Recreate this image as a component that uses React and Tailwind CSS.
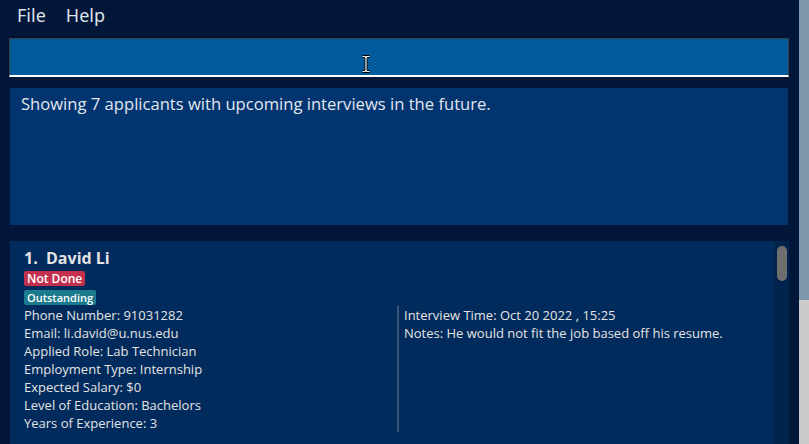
import React from 'react';

const DETAILS = [
  'Phone Number: 91031282',
  'Email: li.david@u.nus.edu',
  'Applied Role: Lab Technician',
  'Employment Type: Internship',
  'Expected Salary: $0',
  'Level of Education: Bachelors',
  'Years of Experience: 3',
];

const IBeam = () => (
  <svg width="10" height="18" viewBox="0 0 10 18" className="absolute left-[351px] top-[16px]">
    <path d="M1.5 1.5h2.5l1 1 1-1h2.5M5 2.5v13M1.5 16.5h2.5l1-1 1 1h2.5" fill="none" stroke="#000" strokeWidth="3" />
    <path d="M1.5 1.5h2.5l1 1 1-1h2.5M5 2.5v13M1.5 16.5h2.5l1-1 1 1h2.5" fill="none" stroke="#fff" strokeWidth="1.2" />
  </svg>
);

const ApplicantCard = () => (
  <div className="w-[764px] h-full bg-[#012b5c] pl-[14px] pt-[7px] text-[#e4e4e4]">
    <div className="text-[16px] leading-[20px] font-bold">1.&nbsp;&nbsp;David Li</div>
    <div className="mt-[3px] flex flex-col items-start gap-[4px]">
      <span className="h-[15px] px-[3px] rounded-[2px] bg-[#c2304d] text-white text-[12px] leading-[15px] font-semibold">Not Done</span>
      <span className="h-[15px] px-[3px] rounded-[2px] bg-[#1b7a8c] text-white text-[11px] leading-[15px] font-semibold">Outstanding</span>
    </div>
    <div className="mt-[1px] flex text-[13px] leading-[18px]">
      <div className="w-[373px]">
        {DETAILS.map((d) => (
          <div key={d}>{d}</div>
        ))}
      </div>
      <div className="border-l-2 border-[#3a5578] pl-[5px] h-[126px]">
        <div>Interview Time: Oct 20 2022 , 15:25</div>
        <div>Notes: He would not fit the job based off his resume.</div>
      </div>
    </div>
  </div>
);

export default function App() {
  return (
    <div className="w-[809px] h-[444px] flex overflow-hidden" style={{ fontFamily: '"Open Sans", sans-serif' }}>
      <div className="w-[799px] h-full bg-[#011638] flex flex-col">
        {/* menu bar */}
        <div className="h-[38px] flex items-start pt-[3px] pl-[17px] gap-[20px] text-[18px] leading-[24px] text-[#dfe3ea]" style={{ fontFamily: '"Noto Sans", sans-serif' }}>
          <span>File</span>
          <span>Help</span>
        </div>

        {/* command box */}
        <div className="relative ml-[9px] w-[780px] h-[39px] bg-[#015a9b] border-t border-x border-[#3d3f44] border-b-2 border-b-white">
          <IBeam />
        </div>

        {/* result display */}
        <div className="mt-[11px] ml-[10px] w-[778px] h-[137px] bg-[#023570] pl-[11px] pt-[5px] text-[16.6px] leading-[22px] text-[#e2e6ee]">
          Showing 7 applicants with upcoming interviews in the future.
        </div>

        {/* applicant list */}
        <div className="mt-[16px] ml-[10px] flex flex-1">
          <ApplicantCard />
          <div className="w-[15px] h-full bg-[#01244f] pt-[5px] flex justify-center">
            <div className="w-[10px] h-[35px] rounded-full bg-[#6f6f6f]" />
          </div>
        </div>
      </div>
      <div className="w-[10px] h-full flex flex-col">
        <div className="h-[300px] bg-[#7d97ac]" />
        <div className="flex-1 bg-[#c9cbcc]" />
      </div>
    </div>
  );
}
